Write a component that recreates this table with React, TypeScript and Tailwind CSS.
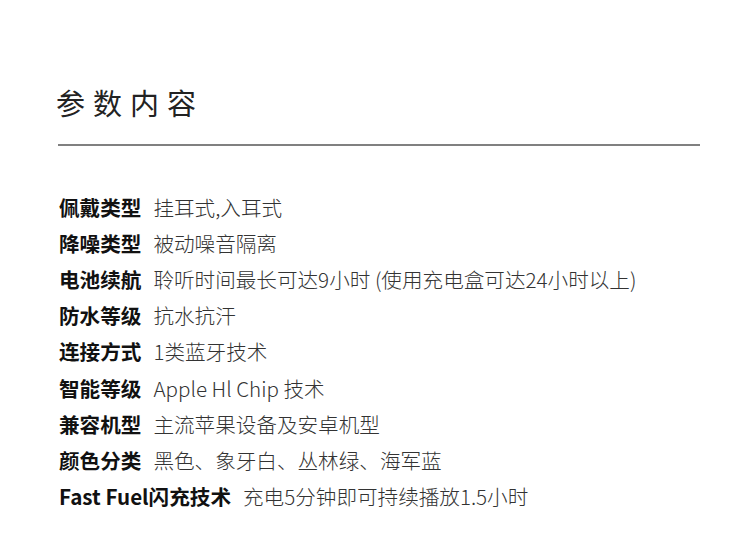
import React from 'react'

const specs: [string, string][] = [
  ['佩戴类型', '挂耳式,入耳式'],
  ['降噪类型', '被动噪音隔离'],
  ['电池续航', '聆听时间最长可达9小时 (使用充电盒可达24小时以上)'],
  ['防水等级', '抗水抗汗'],
  ['连接方式', '1类蓝牙技术'],
  ['智能等级', 'Apple Hl Chip 技术'],
  ['兼容机型', '主流苹果设备及安卓机型'],
  ['颜色分类', '黑色、象牙白、丛林绿、海军蓝'],
  ['Fast Fuel闪充技术', '充电5分钟即可持续播放1.5小时'],
]

export default function App() {
  return (
    <div className="w-[750px] h-[550px] bg-white pl-[58px] pt-[82px] font-['Noto_Sans_CJK_SC',sans-serif]">
      {/* Title */}
      <h1 className="-ml-[2px] text-[29px] leading-[40px] font-normal tracking-[8px] text-[#222]">参数内容</h1>
      <div className="mt-[22px] w-[642px] h-[2px] bg-[#808080]"></div>

      {/* Spec list */}
      <div className="mt-[43px] flex flex-col pl-[1px]">
        {specs.map(([label, value], i) => (
          <div key={i} className="flex items-center h-[36.2px] text-[20.6px]">
            <span className="font-bold text-[#111]">{label}</span>
            <span className="ml-[12px] font-light text-[#333]">{value}</span>
          </div>
        ))}
      </div>
    </div>
  )
}
